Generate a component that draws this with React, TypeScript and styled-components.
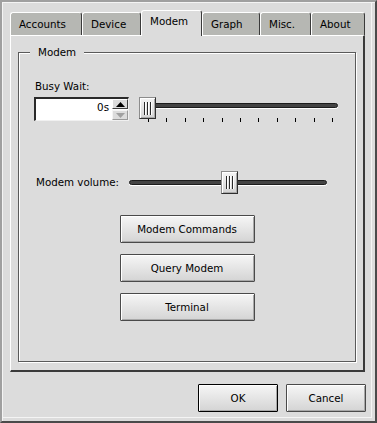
import React from "react";
import styled, { createGlobalStyle, css } from "styled-components";

const FONT = `"DejaVu Sans", "Liberation Sans", sans-serif`;

const GlobalStyle = createGlobalStyle`
  html, body { margin: 0; padding: 0; background: #dcdcdc; }
  * { box-sizing: border-box; }
`;

const Window = styled.div`
  width: 377px;
  height: 423px;
  display: flex;
  flex-direction: column;
  padding: 8px 10px 9px 8px;
  background: #dcdcdc;
  border: 2px solid;
  border-color: #a0a0a0 #4a4a4a #4a4a4a #a0a0a0;
  box-shadow: inset 1px 1px 0 #f4f4f4, inset -3px -3px 0 #dcdcdc,
    inset -4px -4px 0 #f4f4f4;
  font-family: ${FONT};
  font-size: 10.3px;
  line-height: 13px;
  color: #000;
`;

const TabBar = styled.div`
  display: flex;
  align-items: flex-end;
  height: 25px;
  position: relative;
  z-index: 1;
`;

const Tab = styled.div<{ $w: number; $active?: boolean }>`
  width: ${(p) => p.$w}px;
  height: 23px;
  padding: 5px 0 0 8px;
  white-space: nowrap;
  background: #b6b7b3;
  border-top: 1px solid #ffffff;
  border-left: 1px solid #ffffff;
  border-right: 1px solid #3a3a3a;
  border-radius: 3px 3px 0 0;
  ${(p) =>
    p.$active &&
    css`
      height: 26px;
      margin-bottom: -1px;
      padding-top: 4px;
      background: #dcdcdc;
    `}
`;

const Panel = styled.div`
  flex: 1;
  display: flex;
  flex-direction: column;
  padding: 10px 7px 8px 7px;
  border-style: solid;
  border-width: 1px 2px 2px 1px;
  border-color: #ffffff #3a3a3a #3a3a3a #ffffff;
`;

const Group = styled.fieldset`
  flex: 1;
  margin: 0;
  padding: 0;
  min-width: 0;
  display: flex;
  flex-direction: column;
  border: 1px solid #5a5a5a;
  box-shadow: 1px 1px 0 #ffffff, inset 1px 1px 0 #ffffff;
`;

const GroupTitle = styled.legend`
  margin-left: 11px;
  padding: 0 8px;
  line-height: 13px;
  background: #dcdcdc;
`;

const Content = styled.div`
  display: flex;
  flex-direction: column;
  padding: 21px 15px 0 15px;
`;

const FieldLabel = styled.div<{ $ml?: number }>`
  margin-left: ${(p) => p.$ml ?? 1}px;
  white-space: nowrap;
`;

const BusyRow = styled.div`
  margin-top: 4px;
  display: flex;
  align-items: flex-start;
  gap: 10px;
`;

const SpinField = styled.div`
  width: 95px;
  height: 24px;
  flex: none;
  display: flex;
  background: #ffffff;
  border-style: solid;
  border-width: 2px 1px 1px 2px;
  border-color: #2a2a2a #f0f0f0 #f0f0f0 #2a2a2a;
`;

const SpinValue = styled.div`
  flex: 1;
  text-align: right;
  padding: 2px 3px 0 0;
`;

const SpinButtons = styled.div`
  width: 16px;
  display: flex;
  flex-direction: column;
  gap: 1px;
`;

const SpinBtn = styled.div<{ $disabled?: boolean }>`
  flex: 1;
  display: flex;
  align-items: center;
  justify-content: center;
  background: #dcdcdc;
  border: 1px solid;
  border-color: ${(p) =>
    p.$disabled ? "#f4f4f4 #9a9a9a #9a9a9a #f4f4f4" : "#ffffff #404040 #404040 #ffffff"};
`;

const SliderRoot = styled.div<{ $h: number; $w?: number }>`
  position: relative;
  height: ${(p) => p.$h}px;
  ${(p) => (p.$w ? `width: ${p.$w}px; flex: none;` : "flex: 1;")}
`;

const Groove = styled.div<{ $top: number }>`
  margin-top: ${(p) => p.$top}px;
  margin-right: 2px;
  height: 5px;
  background: #444444;
  border: 1px solid #1c1c1c;
  border-radius: 3px;
  box-shadow: 0 1px 0 #ffffff;
`;

const Handle = styled.div<{ $h: number }>`
  position: absolute;
  top: 0;
  width: 17px;
  height: ${(p) => p.$h}px;
  display: flex;
  align-items: center;
  justify-content: center;
  gap: 2px;
  background: linear-gradient(#f4f4f4, #d2d2d2);
  border: 1px solid;
  border-color: #8c8c8c #2e2e2e #2e2e2e #8c8c8c;
  box-shadow: inset 1px 1px 0 #ffffff, inset -1px -1px 0 #a8a8a8;
`;

const GripLine = styled.span`
  width: 1px;
  height: 13px;
  background: #2a2a2a;
  box-shadow: 1px 0 0 #ffffff;
`;

const Ticks = styled.div`
  display: flex;
  justify-content: space-between;
  margin-top: 10px;
  padding: 0 7px 0 9px;
`;

const Tick = styled.span`
  width: 1px;
  height: 4px;
  background: #000;
`;

const VolumeRow = styled.div`
  margin-top: 48px;
  display: flex;
  align-items: center;
  gap: 10px;
`;

const ButtonStack = styled.div`
  margin-top: 21px;
  display: flex;
  flex-direction: column;
  align-items: center;
  gap: 11px;
`;

const PushButton = styled.button<{ $w: number; $default?: boolean }>`
  width: ${(p) => p.$w}px;
  height: 28px;
  padding: 0;
  font-family: ${FONT};
  font-size: 10.3px;
  line-height: 13px;
  color: #000;
  background: linear-gradient(#f6f6f6, #d4d4d4);
  border: 1px solid ${(p) => (p.$default ? "#000000" : "#4a4a4a")};
  border-radius: 1px;
  box-shadow: inset 1px 1px 0 #ffffff, inset -1px -1px 0 #a8a8a8;
`;

const DialogButtons = styled.div`
  margin-top: 12px;
  margin-right: -1px;
  display: flex;
  justify-content: flex-end;
  gap: 8px;
`;

const Arrow = ({ up, color }: { up: boolean; color: string }) => (
  <svg width="9" height="5" viewBox="0 0 9 5">
    <polygon points={up ? "0,5 4.5,0 9,5" : "0,0 4.5,5 9,0"} fill={color} />
  </svg>
);

const Slider = ({
  value,
  width,
  height,
  grooveTop,
  handleHeight,
  ticks,
}: {
  value: number;
  width?: number;
  height: number;
  grooveTop: number;
  handleHeight: number;
  ticks?: number;
}) => (
  <SliderRoot $h={height} $w={width}>
    <Groove $top={grooveTop} />
    {ticks ? (
      <Ticks>
        {Array.from({ length: ticks }).map((_, i) => (
          <Tick key={i} />
        ))}
      </Ticks>
    ) : null}
    <Handle
      $h={handleHeight}
      style={{ left: width ? Math.round((width - 17) * value) : `calc((100% - 17px) * ${value})` }}
    >
      <GripLine />
      <GripLine />
      <GripLine />
    </Handle>
  </SliderRoot>
);

const tabs = [
  { label: "Accounts", w: 72 },
  { label: "Device", w: 59 },
  { label: "Modem", w: 61, active: true },
  { label: "Graph", w: 58 },
  { label: "Misc.", w: 51 },
  { label: "About", w: 54 },
];

export default function App() {
  return (
    <>
      <GlobalStyle />
      <Window>
        <TabBar>
          {tabs.map((t) => (
            <Tab key={t.label} $w={t.w} $active={t.active}>
              {t.label}
            </Tab>
          ))}
        </TabBar>
        <Panel>
          <Group>
            <GroupTitle>Modem</GroupTitle>
            <Content>
              <FieldLabel>Busy Wait:</FieldLabel>
              <BusyRow>
                <SpinField>
                  <SpinValue>0s</SpinValue>
                  <SpinButtons>
                    <SpinBtn>
                      <Arrow up color="#000" />
                    </SpinBtn>
                    <SpinBtn $disabled>
                      <Arrow up={false} color="#a0a0a0" />
                    </SpinBtn>
                  </SpinButtons>
                </SpinField>
                <Slider value={0} height={26} grooveTop={6} handleHeight={22} ticks={11} />
              </BusyRow>
              <VolumeRow>
                <FieldLabel $ml={2}>Modem volume:</FieldLabel>
                <Slider value={0.5} width={200} height={23} grooveTop={9} handleHeight={23} />
              </VolumeRow>
              <ButtonStack>
                <PushButton $w={135}>Modem Commands</PushButton>
                <PushButton $w={135}>Query Modem</PushButton>
                <PushButton $w={135}>Terminal</PushButton>
              </ButtonStack>
            </Content>
          </Group>
        </Panel>
        <DialogButtons>
          <PushButton $w={80} $default>
            OK
          </PushButton>
          <PushButton $w={80}>Cancel</PushButton>
        </DialogButtons>
      </Window>
    </>
  );
}
